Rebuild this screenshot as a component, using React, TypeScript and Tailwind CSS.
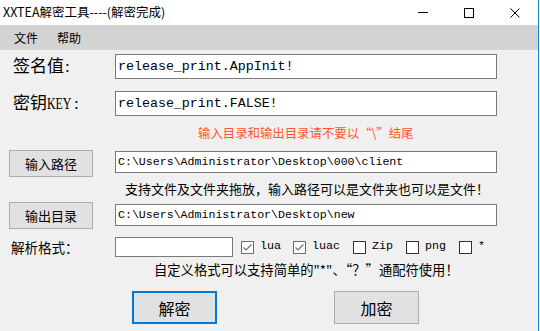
import React from "react";

const cjk = { fontFamily: '"Noto Sans CJK SC", "Noto Sans", sans-serif' };
const serifCjk = { fontFamily: '"Liberation Serif", "Noto Sans CJK SC", serif' };
const mono = { fontFamily: '"Liberation Mono", "Noto Sans CJK SC", monospace' };

function Check({ checked, label, w }: { checked?: boolean; label: string; w: string }) {
  return (
    <div className={`flex items-center gap-[6px] ${w}`}>
      <div
        className={`w-[13px] h-[13px] bg-white border flex items-center justify-center ${
          checked ? "border-[#6e6e6e]" : "border-[#333333]"
        }`}
      >
        {checked && (
          <svg width="11" height="11" viewBox="0 0 11 11">
            <path d="M1.5 5.5 L4 8 L9.5 2.5" stroke="#6e6e6e" strokeWidth="1.2" fill="none" />
          </svg>
        )}
      </div>
      <span className="text-[11.7px] text-black leading-none" style={mono}>
        {label}
      </span>
    </div>
  );
}

export default function App() {
  return (
    <div className="w-[540px] h-[331px] flex overflow-hidden bg-white">
      <div className="w-[538px] flex flex-col">
        {/* title bar */}
        <div className="h-[25px] bg-white flex items-center">
          <span className="ml-[3px] text-[12.5px] text-black leading-none" style={cjk}>
            XXTEA解密工具----(解密完成)
          </span>
          <div className="ml-auto flex items-center h-full">
            <div className="w-[46px] h-full flex items-center justify-center">
              <div className="w-[10px] h-[1px] bg-black" />
            </div>
            <div className="w-[46px] h-full flex items-center justify-center">
              <div className="w-[10px] h-[10px] border border-black" />
            </div>
            <div className="w-[46px] h-full flex items-center justify-center">
              <svg width="10" height="10" viewBox="0 0 10 10">
                <path d="M0.5 0.5 L9.5 9.5 M9.5 0.5 L0.5 9.5" stroke="black" strokeWidth="1" />
              </svg>
            </div>
          </div>
        </div>
        {/* menu */}
        <div className="h-[25px] bg-[#d3d3d3] flex items-center text-[12px] text-black" style={cjk}>
          <span className="ml-[14px]">文件</span>
          <span className="ml-[19px]">帮助</span>
        </div>
        {/* body */}
        <div className="flex-1 bg-[#f0f0f0] flex flex-col pt-[4px]">
          <div className="flex items-center h-[25px]">
            <div className="ml-[13px] w-[102px] shrink-0 flex items-center text-[17px] text-black" style={serifCjk}>
              <span className="shrink-0">签名值</span>
              <span className="shrink-0 ml-[1px]">:</span>
            </div>
            <div className="w-[382px] h-[25px] bg-white border border-[#7a7a7a] flex items-center pl-[2px]">
              <span className="text-[13.3px] text-black" style={mono}>
                release_print.AppInit!
              </span>
            </div>
          </div>
          <div className="flex items-center h-[25px] mt-[12px]">
            <div className="ml-[13px] w-[102px] shrink-0 flex items-center text-[17px] text-black" style={serifCjk}>
              <span className="shrink-0">密钥</span>
              <span className="w-[25px] min-w-0 shrink-0 flex overflow-hidden">
                <span className="whitespace-nowrap origin-left [transform:scaleX(0.7)]">KEY</span>
              </span>
              <span className="shrink-0 ml-[2px]">:</span>
            </div>
            <div className="w-[382px] h-[25px] bg-white border border-[#7a7a7a] flex items-center pl-[2px]">
              <span className="text-[13.3px] text-black" style={mono}>
                release_print.FALSE!
              </span>
            </div>
          </div>
          <div className="h-[14px] mt-[10px] flex items-center">
            <span className="ml-[198px] text-[12.4px] text-[#ff5533] leading-none" style={cjk}>
              输入目录和输出目录请不要以“\”结尾
            </span>
          </div>
          <div className="flex h-[27px] mt-[10px]">
            <div
              className="ml-[9px] w-[84px] h-[27px] bg-[#e1e1e1] border border-[#adadad] flex items-center justify-center text-[13px] text-black"
              style={cjk}
            >
              输入路径
            </div>
            <div className="ml-[22px] mt-[1px] w-[382px] h-[22px] bg-white border border-[#7a7a7a] flex items-center pl-[2px]">
              <span className="text-[11.6px] text-black" style={mono}>
                C:\Users\Administrator\Desktop\000\client
              </span>
            </div>
          </div>
          <div className="h-[14px] mt-[4px] flex items-center">
            <span className="ml-[125px] text-[13px] text-black leading-none" style={cjk}>
              支持文件及文件夹拖放，输入路径可以是文件夹也可以是文件！
            </span>
          </div>
          <div className="flex h-[27px] mt-[7px]">
            <div
              className="ml-[9px] w-[84px] h-[27px] bg-[#e1e1e1] border border-[#adadad] flex items-center justify-center text-[13px] text-black"
              style={cjk}
            >
              输出目录
            </div>
            <div className="ml-[22px] mt-[2px] w-[382px] h-[22px] bg-white border border-[#7a7a7a] flex items-center pl-[2px]">
              <span className="text-[11.6px] text-black" style={mono}>
                C:\Users\Administrator\Desktop\new
              </span>
            </div>
          </div>
          <div className="flex items-center h-[20px] mt-[8px]">
            <span className="ml-[11px] w-[104px] text-[13.5px] text-black" style={cjk}>
              解析格式：
            </span>
            <div className="w-[118px] h-[20px] bg-white border border-[#7a7a7a]" />
            <div className="ml-[8px] flex items-center">
              <Check checked label="lua" w="w-[52px]" />
              <Check checked label="luac" w="w-[60px]" />
              <Check label="Zip" w="w-[53px]" />
              <Check label="png" w="w-[53px]" />
              <Check label="*" w="w-[30px]" />
            </div>
          </div>
          <div className="h-[14px] mt-[6px] flex items-center">
            <span className="ml-[154px] text-[13.3px] text-black leading-none" style={cjk}>
              自定义格式可以支持简单的"*"、“？”通配符使用！
            </span>
          </div>
          <div className="flex mt-[14px]">
            <div
              className="ml-[132px] w-[85px] h-[33px] bg-[#e1e1e1] border-2 border-[#0078d7] flex items-center justify-center text-[16px] text-black"
              style={cjk}
            >
              解密
            </div>
            <div
              className="ml-[117px] w-[85px] h-[33px] bg-[#e1e1e1] border border-[#adadad] flex items-center justify-center text-[16px] text-black"
              style={cjk}
            >
              加密
            </div>
          </div>
        </div>
      </div>
      <div className="w-[1px] h-full bg-[#1883d7]" />
      <div className="w-[1px] h-full bg-white" />
    </div>
  );
}
